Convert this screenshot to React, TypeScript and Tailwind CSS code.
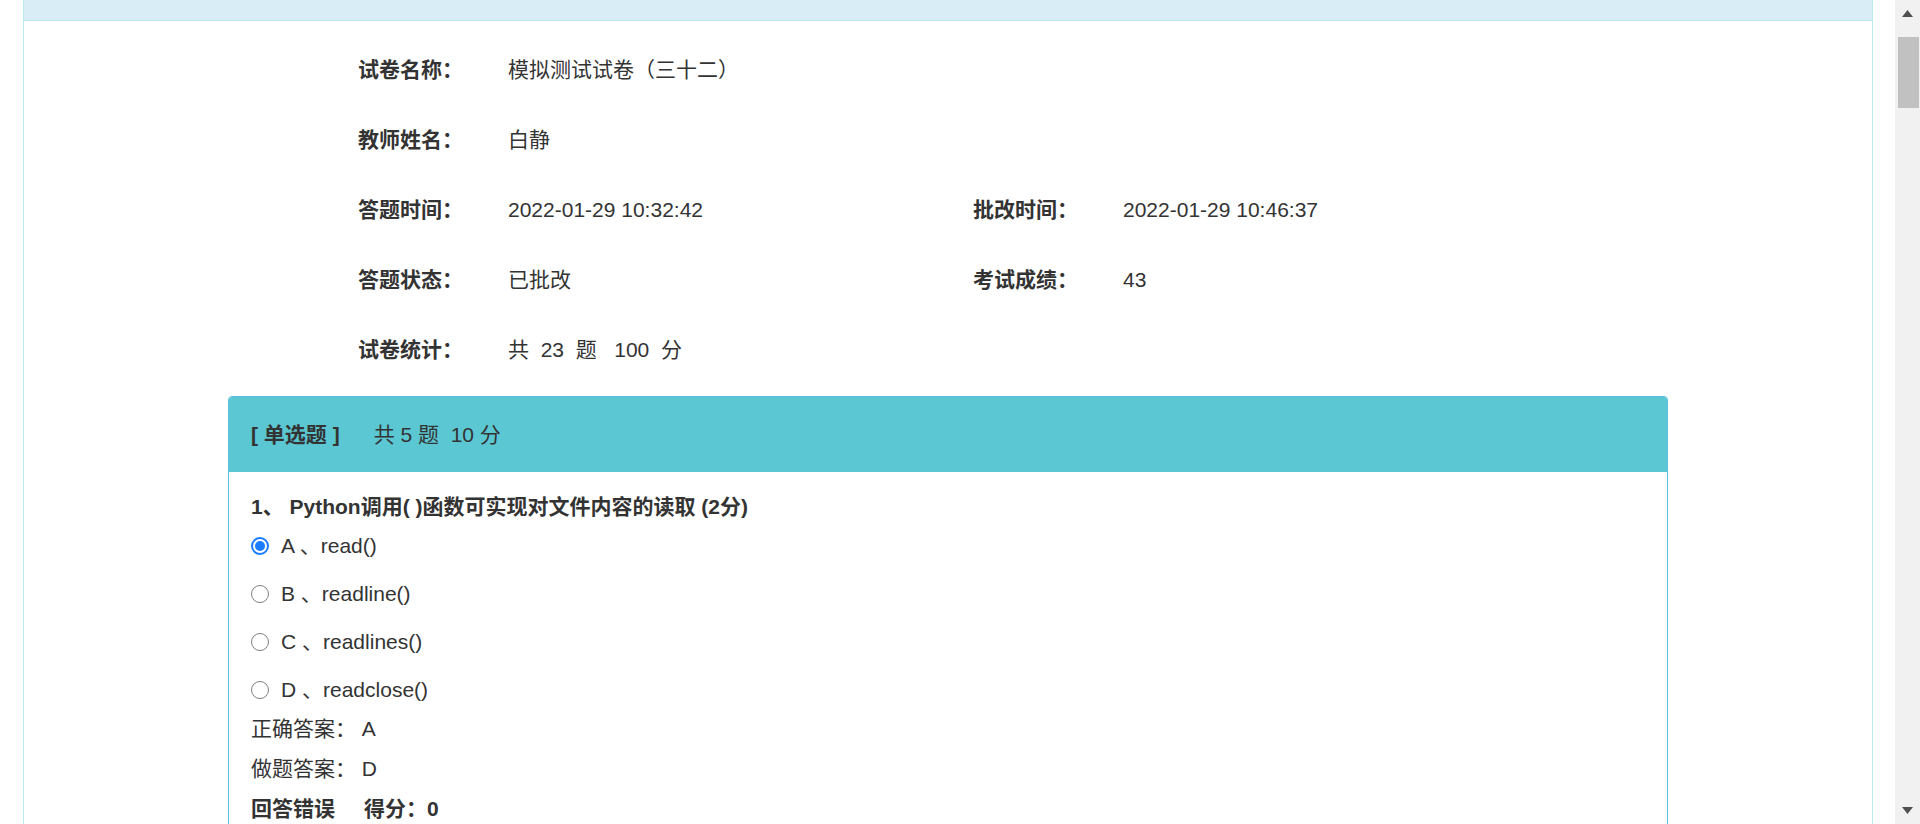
import React from "react"

const font = "font-['Liberation_Sans','Noto_Sans_CJK_SC',sans-serif]"

interface InfoItem {
  label: string
  value: React.ReactNode
}

const rows: InfoItem[][] = [
  [{ label: "试卷名称：", value: "模拟测试试卷（三十二）" }],
  [{ label: "教师姓名：", value: "白静" }],
  [
    { label: "答题时间：", value: "2022-01-29 10:32:42" },
    { label: "批改时间：", value: "2022-01-29 10:46:37" },
  ],
  [
    { label: "答题状态：", value: "已批改" },
    { label: "考试成绩：", value: "43" },
  ],
  [{ label: "试卷统计：", value: "共\u00a0\u00a023\u00a0\u00a0题\u00a0\u00a0\u00a0100\u00a0\u00a0分" }],
]

const options = [
  { key: "A", text: "read()", checked: true },
  { key: "B", text: "readline()", checked: false },
  { key: "C", text: "readlines()", checked: false },
  { key: "D", text: "readclose()", checked: false },
]

function Radio({ checked }: { checked: boolean }) {
  return checked ? (
    <span className="flex h-[18px] w-[18px] shrink-0 items-center justify-center rounded-full border-2 border-[#1a7dff] bg-white">
      <span className="h-[10px] w-[10px] rounded-full bg-[#1a7dff]" />
    </span>
  ) : (
    <span className="h-[18px] w-[18px] shrink-0 rounded-full border border-[#808080] bg-white" />
  )
}

function Scrollbar() {
  return (
    <div className="flex h-full w-[25px] shrink-0 flex-col items-center bg-[#f1f1f1]">
      <div className="flex h-[26px] w-full items-center justify-center">
        <svg width="11" height="7" viewBox="0 0 11 7">
          <path d="M5.5 0 L11 7 L0 7 Z" fill="#505050" />
        </svg>
      </div>
      <div className="ml-[2px] mt-[11px] h-[71px] w-[21px] bg-[#c1c1c1]" />
      <div className="flex-1" />
      <div className="flex h-[28px] w-full items-center justify-center">
        <svg width="11" height="7" viewBox="0 0 11 7">
          <path d="M0 0 L11 0 L5.5 7 Z" fill="#505050" />
        </svg>
      </div>
    </div>
  )
}

export default function App() {
  return (
    <div className={`flex h-[824px] w-full overflow-hidden bg-white text-[21px] text-[#333] ${font}`}>
      <div className="min-w-0 flex-1">
        <div className="ml-[23px] mr-[22px] flex h-[824px] flex-col overflow-hidden border-x border-[#bce8f1]">
          <div className="h-[21px] shrink-0 border-b border-[#bce8f1] bg-[#d9edf7]" />

          <div className="pl-[334px] pt-[14px]">
            {rows.map((row, i) => (
              <div key={i} className="flex h-[70px] items-center">
                {row.map((item) => (
                  <div key={item.label} className="flex w-[615px] items-center">
                    <span className="w-[150px] font-bold">{item.label}</span>
                    <span>{item.value}</span>
                  </div>
                ))}
              </div>
            ))}
          </div>

          <div className="mx-auto mt-[11px] w-[1440px] shrink-0 rounded-t-[4px] border border-[#5bc0de]">
            <div className="flex h-[75px] items-center rounded-t-[3px] bg-[#5bc7d2] px-[22px]">
              <span className="font-bold">[ 单选题 ]</span>
              <span className="ml-[34px]">共 5 题&nbsp;&nbsp;10 分</span>
            </div>
            <div className="pl-[22px] pt-[20px]">
              <div className="flex h-[30px] items-center font-bold">
                1、 Python调用( )函数可实现对文件内容的读取 (2分)
              </div>
              {options.map((o) => (
                <div key={o.key} className="flex h-[48px] items-center">
                  <Radio checked={o.checked} />
                  <span className="ml-[12px]">
                    {o.key} 、{o.text}
                  </span>
                </div>
              ))}
              <div className="flex h-[30px] items-center">正确答案：&nbsp;A</div>
              <div className="mt-[10px] flex h-[30px] items-center">做题答案：&nbsp;D</div>
              <div className="mt-[10px] flex h-[30px] items-center font-bold">
                <span>回答错误</span>
                <span className="ml-[29px]">得分：0</span>
              </div>
              <div className="h-[40px]" />
            </div>
          </div>
        </div>
      </div>
      <Scrollbar />
    </div>
  )
}
